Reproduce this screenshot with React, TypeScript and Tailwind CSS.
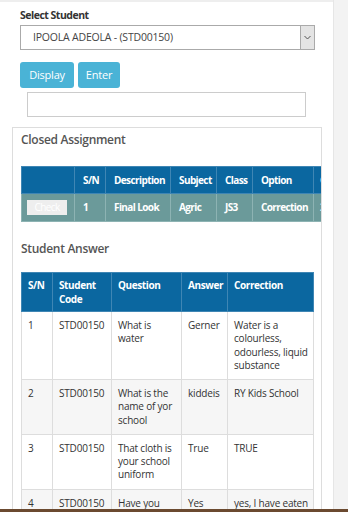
import React from "react"

const assignHead = ["", "S/N", "Description", "Subject", "Class", "Option", "Closing Date"]
const assignWidths = ["w-[53px]", "w-[31px]", "w-[65px]", "w-[46px]", "w-[36px]", "w-[61px]", "w-[80px]"]

const answers = [
  { sn: "1", code: "STD00150", q: "What is water", a: "Gerner", c: "Water is a colourless, odourless, liquid substance" },
  { sn: "2", code: "STD00150", q: "What is the name of yor school", a: "kiddeis", c: "RY Kids School" },
  { sn: "3", code: "STD00150", q: "That cloth is your school uniform", a: "True", c: "TRUE" },
  { sn: "4", code: "STD00150", q: "Have you eaten", a: "Yes", c: "yes, I have eaten" },
]

export default function App() {
  return (
    <div className="relative flex h-[512px] w-[348px] overflow-hidden bg-white font-['Open_Sans',sans-serif] text-[10px] text-[#333]">
      <div className="w-[333px] shrink-0 border-t-2 border-[#eee] bg-white px-3">
        <div className="px-2">
          <label className="block pt-[5px] text-[10.5px] font-bold leading-[16px] tracking-[-0.5px] text-[#333]">
            Select Student
          </label>
          <div className="mt-[2px] flex h-[25px] w-[295px] items-center border border-[#aaa] bg-white">
            <span className="flex-1 pl-3 text-[10.5px] tracking-[-0.2px] text-[#444]">IPOOLA ADEOLA - (STD00150)</span>
            <span className="flex h-[23px] w-[14px] items-center justify-center border-l border-[#aaa] bg-[#e4e4e4]">
              <svg width="7" height="5" viewBox="0 0 7 5" fill="none">
                <path d="M0.5 1l3 3 3-3" stroke="#555" strokeWidth="1" />
              </svg>
            </span>
          </div>
          <div className="mt-3 flex gap-1">
            <button className="h-[26px] w-[54px] rounded-[3px] bg-[#4ab3d6] text-[11px] tracking-[-0.2px] text-white">Display</button>
            <button className="h-[26px] w-[42px] rounded-[3px] bg-[#4ab3d6] text-[11px] tracking-[-0.2px] text-white">Enter</button>
          </div>
          <div className="ml-[7px] mt-1 h-[25px] w-[279px] border border-[#ccc] bg-white" />
        </div>

        <div className="mt-[10px] h-[400px] w-[310px] overflow-hidden border border-[#ddd] bg-white pl-2">
          <h3 className="pt-[2px] text-[12px] font-semibold leading-[20px] tracking-[-0.3px] text-[#555]">Closed Assignment</h3>
          <table className="mt-[16px] w-[372px] max-w-none table-fixed border-collapse whitespace-nowrap text-[10px] font-bold tracking-[-0.6px] text-white">
            <thead>
              <tr className="h-[27px] bg-[#0b67a0]">
                {assignHead.map((h, i) => (
                  <th
                    key={i}
                    className={`${assignWidths[i]} overflow-hidden border border-[#3f86b4] ${i === 6 ? "px-[6px]" : "px-2"} text-left font-bold`}
                  >
                    {h}
                  </th>
                ))}
              </tr>
            </thead>
            <tbody>
              <tr className="h-[28px] bg-[#6b9a9a]">
                <td className="border border-[#8db3b3] px-[5px]">
                  <span className="flex h-[15px] w-[40px] items-center justify-center bg-[#eeeeee] text-[10px] font-normal text-white">
                    Check
                  </span>
                </td>
                <td className="border border-[#8db3b3] px-2">1</td>
                <td className="border border-[#8db3b3] px-2">Final Look</td>
                <td className="border border-[#8db3b3] px-2">Agric</td>
                <td className="border border-[#8db3b3] px-2">JS3</td>
                <td className="overflow-hidden border border-[#8db3b3] px-2">Correction</td>
                <td className="overflow-hidden border border-[#8db3b3] px-[6px]">2019-05-12</td>
              </tr>
            </tbody>
          </table>

          <h3 className="mt-[17px] text-[12px] font-semibold leading-[20px] tracking-[-0.3px] text-[#555]">Student Answer</h3>
          <table className="mt-[13px] w-[292px] table-fixed border-collapse text-[10px] tracking-[-0.2px]">
            <thead>
              <tr className="bg-[#0b67a0] text-white">
                <th className="w-[31px] border border-[#3f86b4] px-[6px] py-[5px] text-left align-top font-bold leading-[14px] tracking-[-0.4px]">S/N</th>
                <th className="w-[59px] border border-[#3f86b4] px-[6px] py-[5px] text-left align-top font-bold leading-[14px] tracking-[-0.4px]">Student Code</th>
                <th className="w-[70px] border border-[#3f86b4] px-[6px] py-[5px] text-left align-top font-bold leading-[14px] tracking-[-0.4px]">Question</th>
                <th className="w-[46px] border border-[#3f86b4] px-[6px] py-[5px] text-left align-top font-bold leading-[14px] tracking-[-0.4px]">Answer</th>
                <th className="w-[86px] border border-[#3f86b4] px-[6px] py-[5px] text-left align-top font-bold leading-[14px] tracking-[-0.4px]">Correction</th>
              </tr>
            </thead>
            <tbody className="text-[#333]">
              {answers.map((r, i) => (
                <tr key={r.sn} className={i % 2 === 1 ? "bg-[#f6f6f6]" : "bg-white"}>
                  <td className="border border-[#ddd] px-[6px] py-[7px] align-top leading-[13.25px]">{r.sn}</td>
                  <td className="border border-[#ddd] px-[6px] py-[7px] align-top leading-[13.25px]">{r.code}</td>
                  <td className="border border-[#ddd] px-[6px] py-[7px] align-top leading-[13.25px]">{r.q}</td>
                  <td className="border border-[#ddd] px-[6px] py-[7px] align-top leading-[13.25px]">{r.a}</td>
                  <td className="border border-[#ddd] py-[7px] pl-[6px] pr-[1px] align-top leading-[13.25px]">{r.c}</td>
                </tr>
              ))}
            </tbody>
          </table>
        </div>
      </div>
      <div className="flex-1 border-l border-[#e6e6e6] bg-[#f3f3f3]" />
      <div className="absolute bottom-0 left-0 h-[3px] w-full bg-[#6b4a30]" />
    </div>
  )
}
